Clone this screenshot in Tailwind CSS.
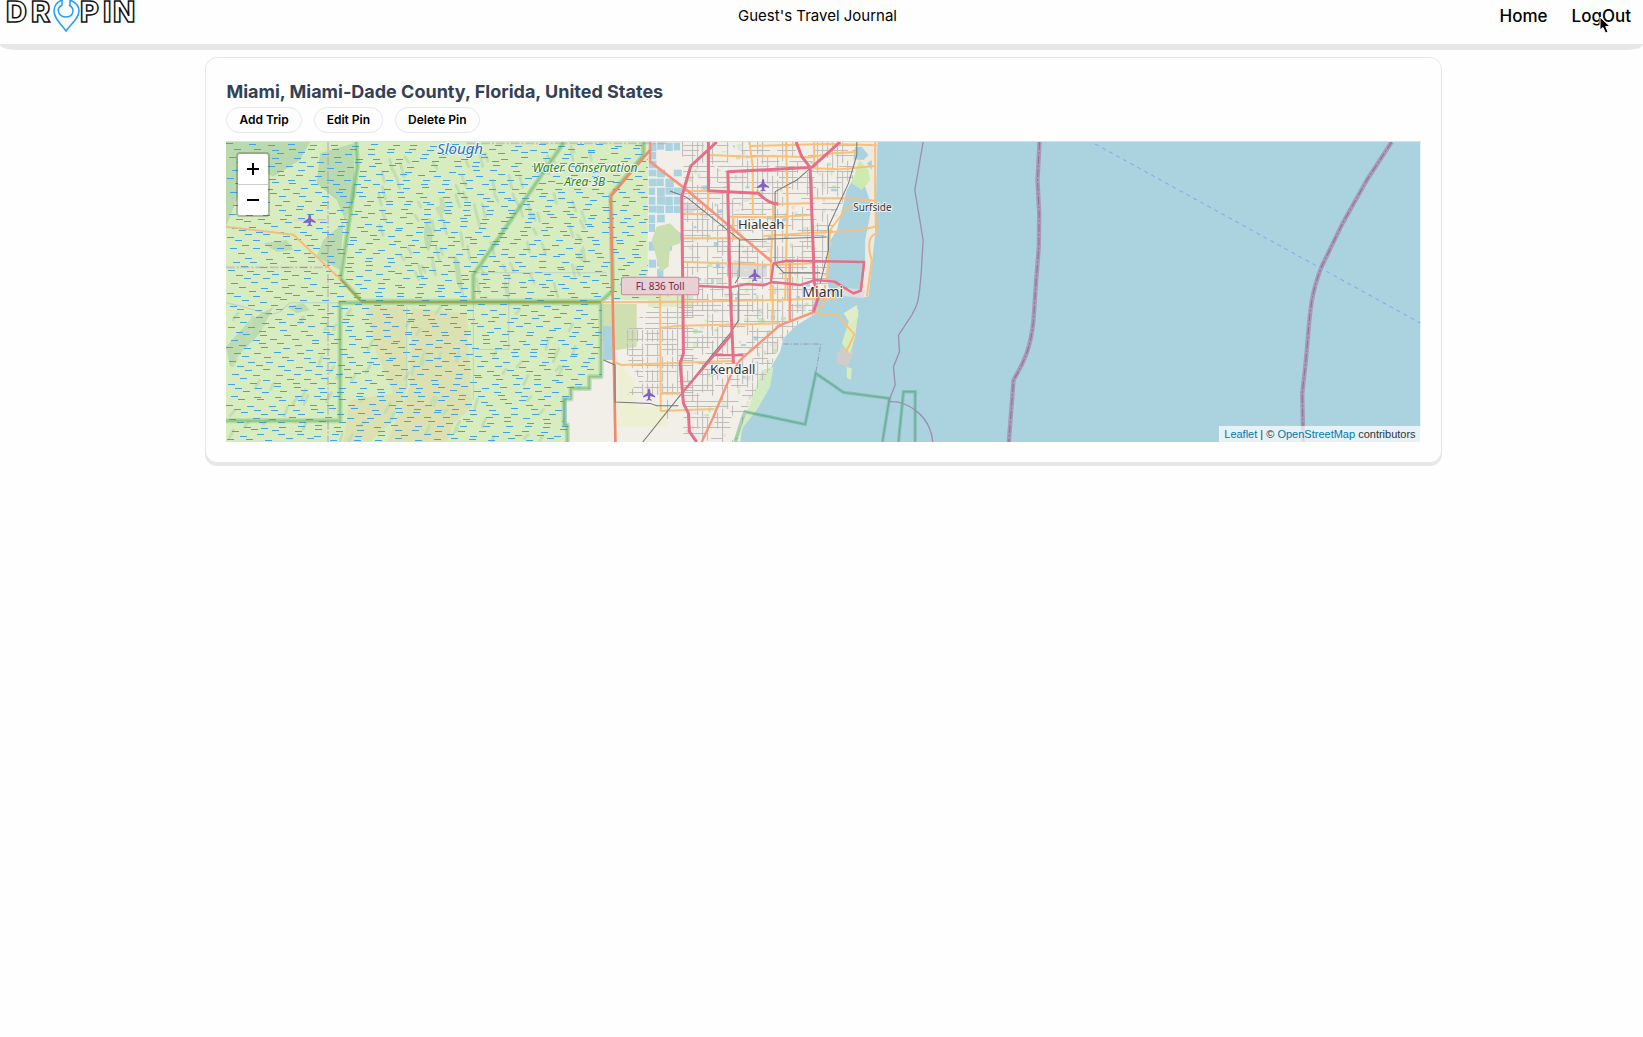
<!DOCTYPE html>
<html lang="en">
<head>
<meta charset="utf-8">
<meta name="viewport" content="width=device-width, initial-scale=1">
<title>Guest's Travel Journal</title>
<script src="https://cdn.jsdelivr.net/npm/@tailwindcss/browser@4"></script>
</head>
<body class="min-h-screen bg-[#fefefe] font-['Inter',sans-serif] text-black">
<header>
  <div class="grid h-11 grid-cols-[1fr_auto_1fr] items-start bg-[#fefefe] pr-3 pl-1">
    <a href="#" aria-label="DropIn" class="block w-36">
      <svg class="h-8 w-36" viewBox="4 0 144 32">
        <g fill="#fff" stroke="#111" stroke-width="1.5" font-family="Inter, sans-serif" font-weight="800" font-size="29">
          <text x="6 31" y="22">DR</text>
          <text x="80 103 113" y="22">PIN</text>
        </g>
        <path d="M62 0C57 2 54 6 54 11C54 18 60 23 66 31C72 23 79 18 79 11C79 6 75 2 70 0V6" fill="none" stroke="#1e9fff" stroke-width="1.5"/>
        <path d="M62 0V5C55 9 59 17 66 17C73 17 76 9 69 5" fill="none" stroke="#1e9fff" stroke-width="1.5"/>
      </svg>
    </a>
    <h1 class="pt-1 text-[15px] leading-6">Guest's Travel Journal</h1>
    <nav class="relative flex justify-end gap-6 text-[17px] leading-8 font-medium">
      <a href="#">Home</a>
      <a href="#">LogOut</a>
      <svg class="absolute top-4 right-5 h-[18px] w-3" viewBox="0 0 12 18"><path d="M1 1V14L4 11.500L6.500 17L9 16L6.700 10.500H11Z" fill="#000" stroke="#fff"/></svg>
    </nav>
  </div>
  <div class="h-1.5 bg-[#e7e7e7] [border-radius:0_0_16px_16px/0_0_6px_6px]"></div>
</header>
<main class="pt-[7px]">
  <section class="ml-[12.5%] w-[calc(75%+4px)] rounded-xl border border-[#e7e7e7] bg-[#fefefe] px-5 pt-5 pb-5 shadow-[0_3px_0_#e7e7e7]">
    <h2 class="text-lg leading-7 font-bold text-[#334155]">Miami, Miami-Dade County, Florida, United States</h2>
    <div class="flex gap-3 pt-px">
      <button type="button" class="h-[26px] rounded-full border border-[#e5e7eb] px-3 text-xs font-semibold">Add Trip</button>
      <button type="button" class="h-[26px] rounded-full border border-[#e5e7eb] px-3 text-xs font-semibold">Edit Pin</button>
      <button type="button" class="h-[26px] rounded-full border border-[#e5e7eb] px-3 text-xs font-semibold">Delete Pin</button>
    </div>
    <div class="relative mt-2 h-[301px] overflow-hidden border-t border-[#dddddd]">
      <svg class="block h-full w-full" viewBox="18 6 3582 900" preserveAspectRatio="xMinYMin slice" fill="none" stroke-linejoin="round">
        <defs>
          <clipPath id="wet"><path d="M18 6H1283V410L1325 480H1145V710H1110V745H1055V775H1030V855H1045V906H18Z"/></clipPath>
          <clipPath id="city"><path d="M1290 6H1910L1900 110L1870 180L1835 280L1825 420L1800 480L1780 525L1730 555L1690 595L1650 685L1590 780L1550 906H1190V800L1260 720L1210 640L1220 560L1330 480L1290 400Z"/></clipPath>
          <path id="plane" d="M0-18C3-18 4-13 4-5L18 5V9L4 5L3 13L8 17V19L0 17L-8 19V17L-3 13L-4 5L-18 9V5L-4-5C-4-13-3-18 0-18Z" fill="#8461c4"/>
        </defs>
        <rect x="18" y="6" width="3582" height="900" fill="#aad3df"/>
        <!-- mainland -->
        <path d="M1040 6H1910L1915 90L1880 150L1850 270L1825 310L1822 430L1835 470L1795 480L1780 525L1730 555L1690 595L1680 635L1650 685L1630 735L1590 805L1570 835L1560 906H1040Z" fill="#f2efe9"/>
        <path d="M1900 6H1972L1965 280L1945 470L1915 472L1935 370L1935 300L1955 200L1925 110L1900 90Z" fill="#eeeadf"/>
        <path d="M1918 60L1945 90L1950 120L1925 150L1895 130Z" fill="#cdebb0"/>
        <path d="M1905 22L1925 20L1945 45L1930 60L1900 58ZM1940 70L1955 60L1955 90Z" fill="#aad3df"/>
        <!-- suburban green and farmland -->
        <path d="M1150 492H1250V620L1190 630L1150 600Z" fill="#d0dfb0"/>
        <path d="M1190 660L1240 720L1250 800H1340V860H1190Z" fill="#edf0d3"/>
        <path d="M1385 185L1440 200L1410 225H1385ZM1540 360L1640 375V410H1540Z" fill="#dadada"/>
        <path d="M1283 440H1420V500H1283Z" fill="#dfe9c3"/>
        <path d="M1150 558H1178V660H1150Z" fill="#aad3df"/>
        <path d="M1590 790L1625 690L1660 680L1650 740L1610 810L1570 860L1555 906H1540Z" fill="#d3ebc4"/>
        <path d="M1850 640L1885 600L1900 640L1880 680L1850 670Z" fill="#d0ccc8"/>
        <path d="M1865 610L1900 500L1915 510L1905 590L1890 640ZM1880 680L1895 685L1892 720L1880 712Z" fill="#d9edbc"/>
        <path d="M1870 520L1910 495L1915 530L1890 550Z" fill="#e3ecc9"/>
        <path d="M1850 440L1935 450L1930 475L1870 468Z" fill="#dcdcdc"/>
        <g id="lakes" fill="#aad3df"></g>
        <path d="M1310 260L1350 250L1380 280V310L1350 320L1345 380L1320 395L1295 300Z" fill="#c9dfaf"/>
        <g clip-path="url(#city)"><g id="parks"></g><path id="streets" stroke="#bebcbb" stroke-width="3"/></g>
        <!-- wetlands -->
        <path d="M18 6H1283V410L1325 480H1145V710H1110V745H1055V775H1030V855H1045V906H18Z" fill="#d7edc0"/>
        <path d="M440 500H555L560 750L520 840L450 906H370L390 780L520 760L470 640ZM575 505L740 520L755 800L700 850L680 906H500L570 740Z" fill="#dbe1b0"/>
        <path d="M18 6H270L240 60L160 110L90 70L50 180L18 260ZM300 40L400 10L405 170L375 240L350 180L290 130ZM310 300L370 250L360 390L290 350Z" fill="#b9d9ae"/>
        <path d="M18 620L90 540L160 500L120 580L60 640L30 680ZM200 500L250 490L270 510L230 520ZM615 250C640 240 645 300 625 335C610 315 610 280 615 250ZM700 350C720 340 720 400 735 480L710 430ZM130 310L200 300L220 330L170 335Z" fill="#bcdbb0"/>
        <g clip-path="url(#wet)">
          <path id="sloughs" stroke="#c2deb4" stroke-width="9" stroke-linecap="round"/>
          <path id="dashes" stroke="#429fee" stroke-width="3"/>
        </g>
        <path d="M324 6V906M18 382H324M740 10H1340" stroke="#b59bb5" stroke-opacity=".55" stroke-width="5" stroke-dasharray="26 6 6 6"/>
        <path d="M220 240H325" stroke="#ecc9d5" stroke-width="5"/>
        <path d="M18 488L70 500L150 525L180 515L210 488H360M760 490V780M560 500V740M760 398H1160M866 398V628H770" stroke="#9fb8cc" stroke-opacity=".5" stroke-width="3"/>
        <!-- park boundaries -->
        <g stroke="#4ba653" stroke-opacity=".26" stroke-width="15">
          <path d="M408 6L412 80L385 260L362 415L425 484H760V405L1032 6M760 484H1143L1178 452L1172 165L1270 45V6M18 842H360V488H1143V710H1108V745H1053V777H1032V855H1042V906"/>
        </g>
        <g stroke="#479d4c" stroke-opacity=".3" stroke-width="6">
          <path d="M408 6L412 80L385 260L362 415L425 484H760V405L1032 6M760 484H1143L1178 452L1172 165L1270 45V6M18 842H360V488H1143V710H1108V745H1053V777H1032V855H1042V906"/>
        </g>
        <g transform="translate(990 435)" stroke-linejoin="miter">
          <path d="M555 470L575 405L585 380L765 418L797 265L880 322L1018 340L997 470M1045 470L1060 320H1095V470" stroke="#4ba673" stroke-opacity=".4" stroke-width="10"/>
          <path d="M585 380L765 418L797 265L880 322L1018 340L997 470M1045 470L1060 320H1095V470" stroke="#4a9a77" stroke-opacity=".5" stroke-width="3"/>
          <path d="M700 177H812L797 262" stroke="#8c7aa8" stroke-width="2" stroke-dasharray="16 5 4 5"/>
        </g>
        <!-- secondary roads -->
        <g stroke="#f9c07b" stroke-width="6">
          <path d="M18 260L220 284L362 418" stroke="#f7bd78"/>
          <path d="M362 418L425 486H1143" stroke="#a4a648"/>
          <path d="M1143 487L1400 485L1700 479L1850 474"/>
          <g transform="translate(1140 0)">
            <path d="M330 45L450 50L520 48L630 52L700 40L770 36M450 18L580 14L700 12L830 16M640 85L720 88L825 78M250 153H385M530 192L630 190M640 175L740 175L825 182M390 230L520 232L635 225M490 288L640 278L770 272L825 260M245 295H430M245 365L520 375L640 370M250 222H300C325 210 325 190 325 153"/>
            <path d="M448 6L458 80V225M558 6L562 200L555 480M642 6V85M520 195L512 370V480M825 6V180L828 280C800 290 805 330 815 360L800 470M770 185L735 210L690 270L685 350L680 420M400 235V300"/>
          </g>
          <g transform="translate(990 435)">
            <path d="M330 28L332 378L490 372M332 128L390 122L690 115M195 232L215 240L330 235L550 228M332 325H390M668 0V115M795 80L815 88L860 88L913 148L888 200M825 0L820 60L800 75"/>
          </g>
        </g>
        <!-- trunk roads -->
        <g stroke="#f9937b" stroke-width="8">
          <path d="M1290 6V65L1400 150L1655 365" />
          <path d="M1290 30L1172 168L1178 486L1186 906" stroke="#f08a6c"/>
          <path d="M1709 370V540M1785 515L1680 555L1560 660L1530 710L1480 830L1445 906M1840 425L1900 460L1922 452L1932 365" stroke-width="7"/>
        </g>
        <!-- railways -->
        <g stroke="#777" stroke-width="3">
          <path d="M1350 153L1400 172L1560 300L1820 291M1910 6V45L1885 130L1825 260V330L1800 430M1860 8L1770 85L1730 120L1665 155V370M1665 370L1690 398H1800M1558 300L1557 410L1545 430M1556 435V540L1530 580L1480 640L1385 760L1268 906M1150 660L1185 675V786L1290 790L1310 797H1375"/>
        </g>
        <!-- motorways -->
        <g stroke="#e66e89" stroke-width="9">
          <path d="M1490 6L1412 78L1385 170L1390 640L1380 670L1390 790L1405 820L1408 875L1430 906"/>
          <path d="M1465 6V152L1520 155L1615 160C1640 185 1655 190 1675 192M1525 155L1523 95L1620 90L1775 82L1860 6M1728 6L1745 50L1770 82L1780 350L1782 425L1795 470L1780 515M1523 155L1530 440L1535 560L1540 670"/>
          <path d="M1436 438L1530 442L1580 432L1630 436L1656 426L1740 435L1785 420L1845 425L1900 460L1922 452L1932 366L1700 362L1660 370L1652 430" stroke-width="7"/>
          <path d="M1387 757L1535 583M1480 645H1570" stroke-width="7"/>
        </g>
        <!-- maritime borders -->
        <path d="M2109 6L2084 150L2109 300L2103 400C2095 500 2090 495 2075 525L2035 585L2038 635L2020 680L2025 735L2005 785C2060 780 2130 825 2138 906" stroke="#9d8fb0" stroke-width="4"/>
        <g stroke="#a99ab8" stroke-width="13">
          <path d="M2458 6L2452 120L2457 220L2456 320L2448 420L2440 540C2432 620 2415 660 2380 720L2366 906"/>
          <path d="M3514 6L3440 120L3367 250L3304 380C3265 480 3270 530 3256 670L3246 760L3249 906"/>
        </g>
        <g stroke="#8f6f98" stroke-width="3" stroke-dasharray="24 6 5 6">
          <path d="M2458 6L2452 120L2457 220L2456 320L2448 420L2440 540C2432 620 2415 660 2380 720L2366 906"/>
          <path d="M3514 6L3440 120L3367 250L3304 380C3265 480 3270 530 3256 670L3246 760L3249 906"/>
        </g>
        <path d="M2625 12L3600 549" stroke="#86a8ea" stroke-width="3" stroke-dasharray="12 12"/>
        <use href="#plane" x="269" y="240"/><use href="#plane" x="1629" y="135"/><use href="#plane" x="1604" y="405"/><use href="#plane" x="1287" y="763"/>
        <rect x="1204" y="412" width="232" height="52" rx="6" fill="#e8d0d5" stroke="#c98a9b" stroke-width="3"/>
        <g font-family="Noto Sans, sans-serif" text-anchor="middle" stroke="#fff" stroke-opacity=".75" stroke-width="6" paint-order="stroke" fill="#333">
          <text x="720" y="42" font-size="45" font-style="italic" fill="#2573c4">Slough</text>
          <text x="1095" y="96" font-size="36" font-style="italic" fill="#268526">Water Conservation</text>
          <text x="1094" y="138" font-size="36" font-style="italic" fill="#268526">Area 3B</text>
          <text x="1623" y="267" font-size="39">Hialeah</text>
          <text x="1957" y="214" font-size="30">Surfside</text>
          <text x="1808" y="471" font-size="42">Miami</text>
          <text x="1538" y="702" font-size="39">Kendall</text>
          <text x="1320" y="449" font-size="30" fill="#7b2946" stroke="none">FL 836 Toll</text>
        </g>
      </svg>
      <div class="absolute top-[10px] left-[10px] overflow-hidden rounded-sm border-2 border-black/20 bg-clip-padding">
        <button type="button" aria-label="Zoom in" class="flex h-[31px] w-[30px] items-center justify-center border-b border-[#cccccc] bg-white"><svg class="size-3" viewBox="0 0 12 12"><path d="M0 6H12M6 0V12" stroke="#000" stroke-width="2"/></svg></button>
        <button type="button" aria-label="Zoom out" class="flex size-[30px] items-center justify-center bg-white"><svg class="size-3" viewBox="0 0 12 12"><path d="M0 6H12" stroke="#000" stroke-width="2"/></svg></button>
      </div>
      <div class="absolute right-0 bottom-0 bg-white/70 px-[5px] font-['Liberation_Sans',sans-serif] text-[11px] leading-4 text-[#333333]"><a href="#" class="text-[#0078a8]">Leaflet</a> | © <a href="#" class="text-[#0078a8]">OpenStreetMap</a> contributors</div>
    </div>
  </section>
</main>
<script>
// Seeded generator, so that the terrain texture is the same on every load
let seed = 7;
const rnd = () => (seed = (seed * 16807) % 2147483647) / 2147483647;
const set = (id, d) => document.getElementById(id).setAttribute('d', d);
// Three map units make one screen pixel; thin strokes sit on pixel centres
const snap = v => Math.round(v / 3) * 3 + 1.5;
let d = '';
for (let y = 10, r = 0; y < 906; y += 13, r++)
  for (let x = 18 + (r * 23) % 60; x < 1330; x += 50 + rnd() * 22)
    d += `M${snap(x) - 1.5} ${snap(y + rnd() * 8)}h21`;
set('dashes', d);
d = '';
for (let i = 0; i < 80; i++) d += `M${(470 + rnd() * 660) | 0} ${(20 + rnd() * 420) | 0}l${(6 + rnd() * 6) | 0} ${(15 + rnd() * 28) | 0}`;
for (let i = 0; i < 70; i++) d += `M${(30 + rnd() * 1050) | 0} ${(500 + rnd() * 390) | 0}l${-(6 + rnd() * 10) | 0} ${(10 + rnd() * 20) | 0}`;
set('sloughs', d);
d = '';
for (let x = 1340; x < 1910; x += 15)
  for (let y = 6; y < 906; y += 40 + rnd() * 70) if (rnd() > 0.3 && !(x < 1385 && y < 440) && !(x < 1420 && y > 800)) d += `M${snap(x)} ${y | 0}v${(25 + rnd() * 70) | 0}`;
for (let y = 14; y < 906; y += 16)
  for (let x = 1390; x < 1910; x += 40 + rnd() * 70) if (rnd() > 0.3) d += `M${x | 0} ${snap(y)}h${(25 + rnd() * 70) | 0}`;
for (let x = 1220; x < 1390; x += 15)
  for (let y = 570; y < 740; y += 40) if (rnd() > 0.3) d += `M${snap(x)} ${y}v35`;
for (let y = 500; y < 760; y += 16)
  for (let x = 1225; x < 1380; x += 50) if (rnd() > 0.3) d += `M${x} ${snap(y)}h45`;
set('streets', d);
// Quarry lakes: cells separated by narrow causeways
let s = '';
for (let x = 1286; x < 1384; x += 25)
  for (let y = 8; y < 425; y += 27) {
    const gap = (y > 235 && y < 400 && x < 1370) || (x > 1300 && y < 70);
    if (rnd() > (gap ? 0.65 : 0.12)) s += `<rect x="${x}" y="${y}" width="${(19 + rnd() * 7) | 0}" height="${(20 + rnd() * 8) | 0}"/>`;
  }
document.getElementById('lakes').innerHTML = s;
s = '';
const fills = ['#c8e6b8', '#aad3df', '#dcdcd8', '#e6dfe0', '#d8edc4'];
for (let i = 0; i < 260; i++)
  s += `<rect x="${(1390 + rnd() * 500) | 0}" y="${(10 + rnd() * 880) | 0}" width="${(5 + rnd() * 13) | 0}" height="${(5 + rnd() * 11) | 0}" fill="${fills[(rnd() * 5) | 0]}"/>`;
document.getElementById('parks').innerHTML = s;
</script>
</body>
</html>
